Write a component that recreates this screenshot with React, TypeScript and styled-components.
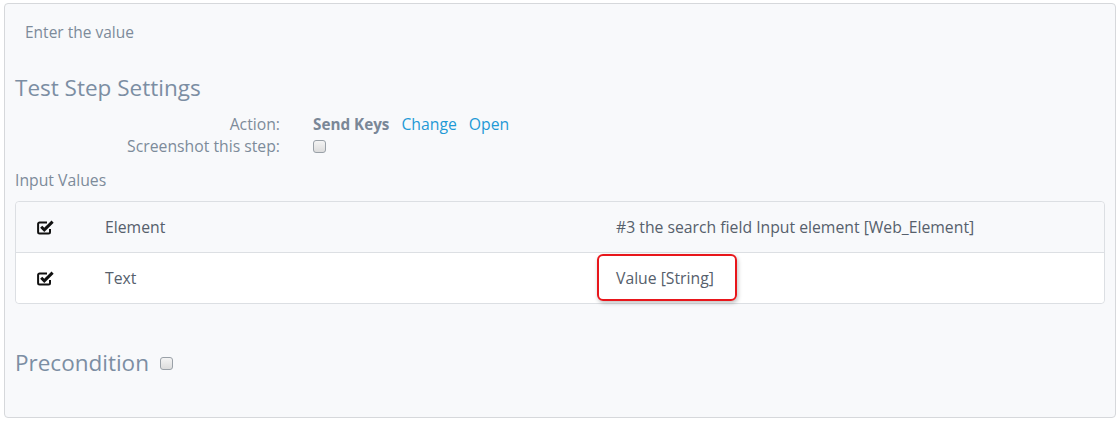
import React from "react";
import styled, { createGlobalStyle } from "styled-components";

const Global = createGlobalStyle`
  html, body { margin: 0; padding: 0; background: #ffffff; }
  body { font-family: "Open Sans", "Noto Sans", sans-serif; }
`;

const Page = styled.div`
  padding: 3px 4px 5px 4px;
  width: 1120px;
  box-sizing: border-box;
`;

const Panel = styled.div`
  border: 1px solid #d6d8db;
  border-radius: 4px;
  background: #f8f9fb;
  height: 415px;
  box-sizing: border-box;
  padding: 0 10px 0 10px;
  display: flex;
  flex-direction: column;
`;

const Hint = styled.div`
  font-size: 15.5px;
  color: #7d8b9a;
  padding: 16px 0 0 10px;
  line-height: 24px;
`;

const Heading = styled.h3`
  margin: 0;
  font-weight: 400;
  font-size: 22.5px;
  color: #7c8ea3;
  line-height: 32px;
  display: flex;
  align-items: center;
  gap: 11px;
`;

const SettingsHeading = styled(Heading)`
  margin-top: 28px;
`;

const Form = styled.div`
  display: grid;
  grid-template-columns: 265px auto;
  column-gap: 33px;
  margin-top: 9px;
  font-size: 15.75px;
  line-height: 22px;
`;

const Label = styled.div`
  text-align: right;
  color: #7d8b9a;
`;

const Value = styled.div`
  display: flex;
  align-items: center;
  gap: 12px;
  color: #7d8b9a;
`;

const Strong = styled.span`
  font-weight: 700;
  font-size: 15.25px;
  color: #7a8797;
`;

const Link = styled.a`
  color: #1f9ad6;
  text-decoration: none;
`;

const Box = styled.span`
  display: inline-block;
  width: 11px;
  height: 11px;
  border: 1px solid #9aa1a8;
  border-radius: 3px;
  background: linear-gradient(#f4f4f4, #dcdcdc);
`;

const SubLabel = styled.div`
  font-size: 15.75px;
  color: #7d8b9a;
  margin-top: 12px;
  line-height: 22px;
`;

const Table = styled.div`
  margin-top: 10px;
  border: 1px solid #dcdfe3;
  border-radius: 4px;
  background: #ffffff;
`;

const Row = styled.div<{ $shaded?: boolean; $last?: boolean }>`
  display: grid;
  grid-template-columns: 89px 511px 1fr;
  height: 50px;
  align-items: center;
  background: ${(p) => (p.$shaded ? "#f8f9fb" : "#ffffff")};
  border-bottom: ${(p) => (p.$last ? "none" : "1px solid #dcdfe3")};
  border-radius: ${(p) => (p.$shaded ? "4px 4px 0 0" : "0 0 4px 4px")};
  font-size: 15.75px;
  color: #56606c;
`;

const IconCell = styled.div`
  padding-left: 21px;
  display: flex;
  align-items: center;
`;

const Cell = styled.div``;

const ValueCell = styled.div`
  position: relative;
`;

const Highlight = styled.div`
  position: absolute;
  left: -19px;
  top: -13px;
  width: 140px;
  height: 47px;
  box-sizing: border-box;
  border: 2px solid #e8161b;
  border-radius: 6px;
  box-shadow: 1px 2px 4px rgba(0, 0, 0, 0.25);
`;

const Spacer = styled.div`
  height: 43px;
`;

const CheckIcon = () => (
  <svg width="17" height="15" viewBox="0 0 17 15">
    <path
      d="M13 9v3a1.5 1.5 0 0 1-1.5 1.5H2.6A1.5 1.5 0 0 1 1.1 12V4a1.5 1.5 0 0 1 1.5-1.5H10"
      fill="none"
      stroke="#111"
      strokeWidth="2"
    />
    <path d="M4.2 6.8l3.1 3.1L15.6 1.6" fill="none" stroke="#111" strokeWidth="3" strokeLinejoin="miter" />
  </svg>
);

export default function App() {
  return (
    <>
      <Global />
      <Page>
        <Panel>
          <Hint>Enter the value</Hint>
          <SettingsHeading>Test Step Settings</SettingsHeading>
          <Form>
            <Label>Action:</Label>
            <Value>
              <Strong>Send Keys</Strong>
              <Link href="#">Change</Link>
              <Link href="#">Open</Link>
            </Value>
            <Label>Screenshot this step:</Label>
            <Value>
              <Box />
            </Value>
          </Form>
          <SubLabel>Input Values</SubLabel>
          <Table>
            <Row $shaded>
              <IconCell>
                <CheckIcon />
              </IconCell>
              <Cell>Element</Cell>
              <Cell>#3 the search field Input element [Web_Element]</Cell>
            </Row>
            <Row $last>
              <IconCell>
                <CheckIcon />
              </IconCell>
              <Cell>Text</Cell>
              <ValueCell>
                <Highlight />
                Value [String]
              </ValueCell>
            </Row>
          </Table>
          <Spacer />
          <Heading>
            Precondition <Box />
          </Heading>
        </Panel>
      </Page>
    </>
  );
}
